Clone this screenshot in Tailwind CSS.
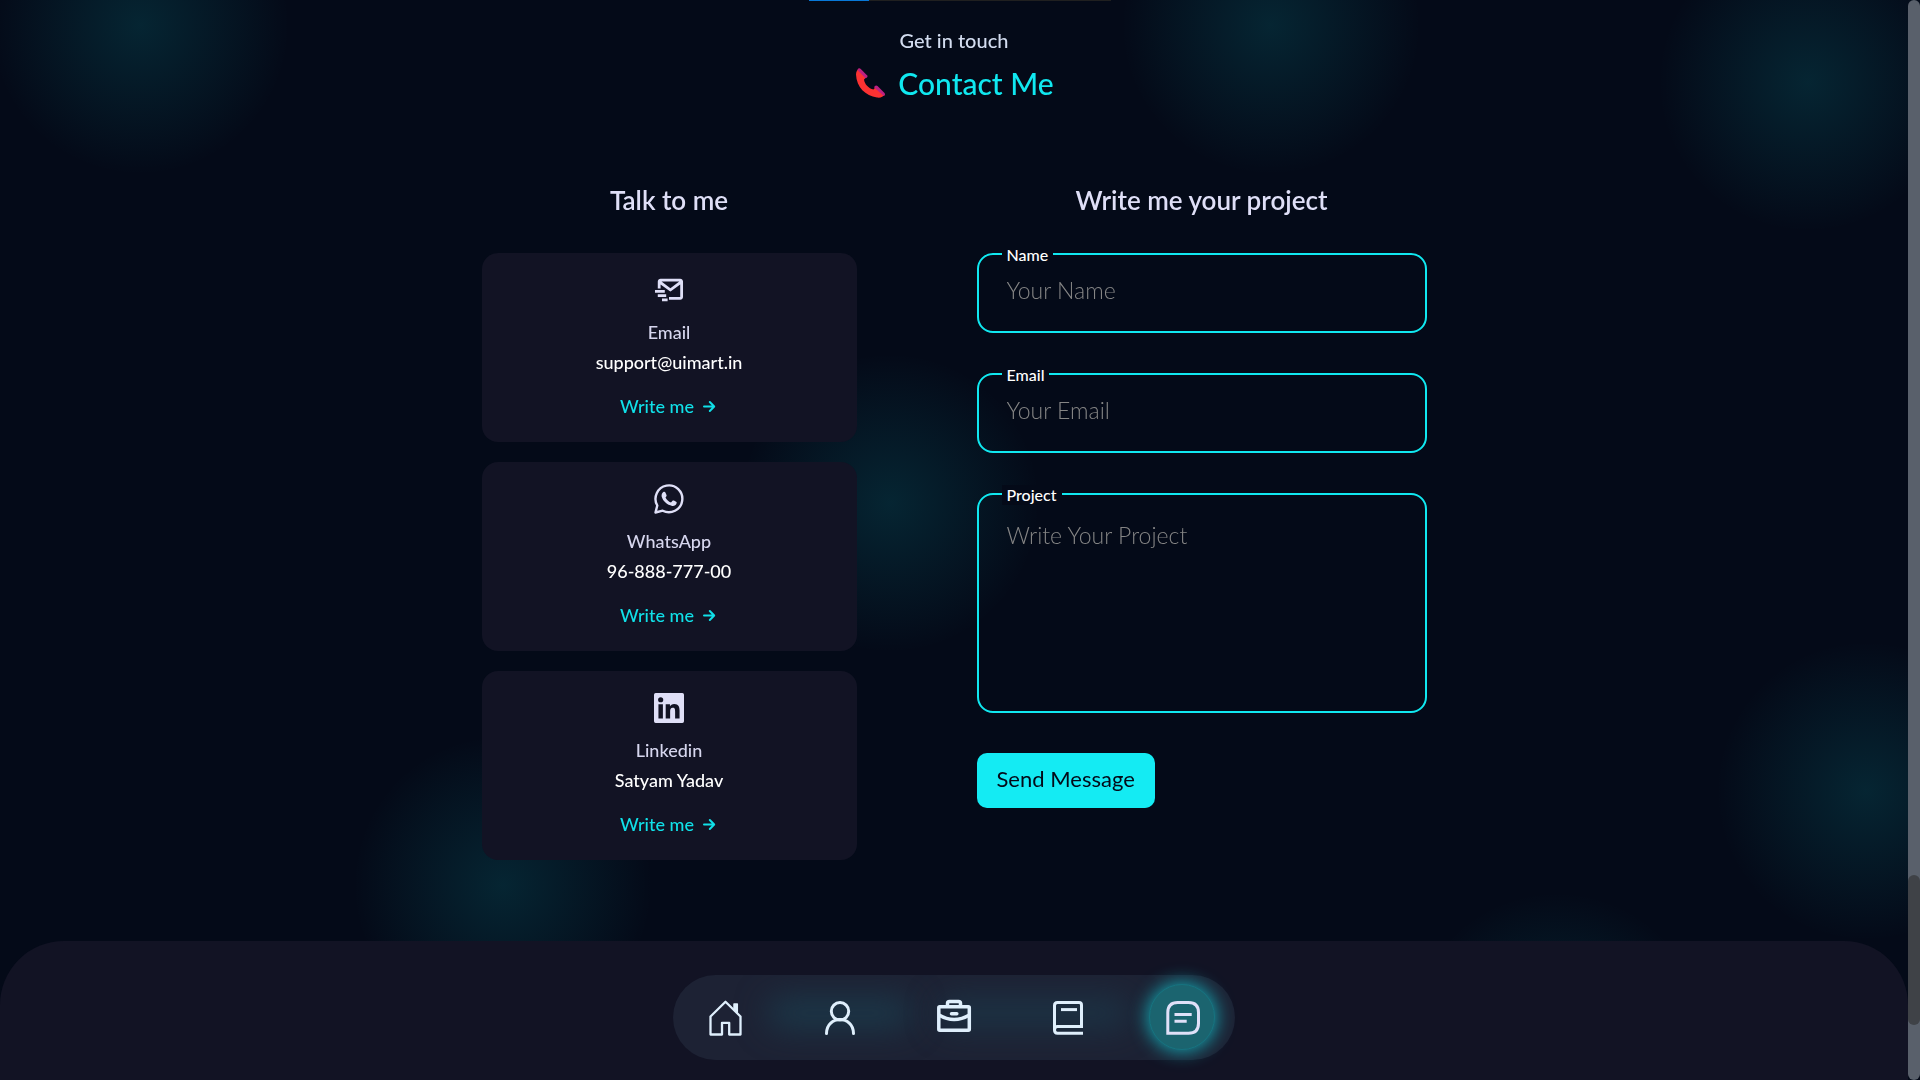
<!DOCTYPE html>
<html lang="en">
  <head>
    <meta charset="UTF-8" />
    <meta name="viewport" content="width=device-width, initial-scale=1.0" />
    <title>Contact Me</title>
    <script src="https://cdn.jsdelivr.net/npm/@tailwindcss/browser@4"></script>
  </head>
  <body class="relative flex min-h-screen flex-col overflow-x-hidden bg-[#040a18] pr-3 font-['Lato',sans-serif] text-white">

    <!-- Background glows -->
    <div class="pointer-events-none absolute inset-0 overflow-hidden" aria-hidden="true">
      <div class="absolute -left-[10px] -top-[125px] size-[300px] bg-[radial-gradient(closest-side,rgba(16,232,240,0.12),transparent)]"></div>
      <div class="absolute left-[1121px] -top-[125px] size-[300px] bg-[radial-gradient(closest-side,rgba(16,232,240,0.12),transparent)]"></div>
      <div class="absolute left-[1658px] -top-[68px] size-[300px] bg-[radial-gradient(closest-side,rgba(16,232,240,0.12),transparent)]"></div>
      <div class="absolute left-[740px] top-[353px] size-[300px] bg-[radial-gradient(closest-side,rgba(16,232,240,0.12),transparent)]"></div>
      <div class="absolute left-[353px] top-[735px] size-[300px] bg-[radial-gradient(closest-side,rgba(16,232,240,0.12),transparent)]"></div>
      <div class="absolute left-[1716px] top-[641px] size-[300px] bg-[radial-gradient(closest-side,rgba(16,232,240,0.12),transparent)]"></div>
      <div class="absolute left-[1407px] top-[892px] size-[300px] bg-[radial-gradient(closest-side,rgba(16,232,240,0.12),transparent)]"></div>
    </div>

    <!-- Scroll progress -->
    <div class="fixed left-1/2 top-0 h-px w-[302px] -translate-x-1/2 bg-[#202020]">
      <div class="h-full w-1/5 bg-[#0878d8]"></div>
    </div>

    <!-- Contact -->
    <main class="relative px-6 pt-7">
      <header class="flex flex-col items-center gap-3">
        <p class="text-xl leading-6 font-medium text-[#d3ddf0]">Get in touch</p>
        <h1 class="flex items-center gap-3 text-[30px] leading-[38px] font-medium text-[#10e8f0]">
          <svg class="size-8" viewBox="0 0 32 32" aria-hidden="true">
            <path d="M2 7.5C2 4.500 3.500 2.500 5 1.500L13 9.500L10 12.500C10.500 17 14.500 21.500 19.500 22.500L22.500 19L31 27.500C29 30 26.500 31 23 30.500C11.500 29 2.500 20 2 7.500Z" fill="#fb3232" />
            <path d="M3.800 2.200Q5 .500 6.500 1.800L13.200 8.500Q14 9.600 13 10.500L11.500 11.200L3.500 3Z" fill="#bc2082" />
            <path d="M20.500 19.500Q22 17.800 23.500 19L30.500 26Q31.500 27.200 30.600 28.400L29.800 29L20 20.200Z" fill="#bc2082" />
          </svg>
          Contact Me
        </h1>
      </header>

      <div class="mx-auto mt-[82px] grid w-fit grid-cols-[375px_450px] items-start gap-[120px]">
        <section>
          <h2 class="mb-[37px] text-center text-[26px] leading-8 font-semibold text-[#dfdff7]">Talk to me</h2>

          <div class="grid gap-5">
            <article class="flex flex-col items-center rounded-2xl bg-[#121324] pt-[22px] pb-6 text-lg leading-6 font-medium">
              <svg class="size-[30px] fill-[#dfdff7]" viewBox="1.300 1.300 21.400 21.400" aria-hidden="true">
                <path d="M20 4H6c-1.103 0-2 .897-2 2v5h2V8l6.400 4.800a1 1 0 0 0 1.200 0L20 8v9h-8v2h8c1.103 0 2-.897 2-2V6c0-1.103-.897-2-2-2zm-7 6.750L6.666 6h12.668L13 10.750z" />
                <path d="M2 12h7v2H2zm2 3h6v2H4zm3 3h4v2H7z" />
              </svg>
              <h3 class="mt-[15px] text-[#d6d6ee]">Email</h3>
              <p class="mt-1.5">support@uimart.in</p>
              <a href="mailto:support@uimart.in" class="mt-5 flex items-center gap-2 text-[#10e0e8]">
                Write me
                <svg class="size-4 fill-none stroke-current stroke-2" viewBox="0 0 16 16" stroke-linecap="round" stroke-linejoin="round" aria-hidden="true"><path d="M2 8.500H12M7.800 4L12.200 8.500L7.800 13" /></svg>
              </a>
            </article>

            <article class="flex flex-col items-center rounded-2xl bg-[#121324] pt-[22px] pb-6 text-lg leading-6 font-medium">
              <svg class="size-[30px]" viewBox="0 0 30 30" aria-hidden="true">
                <path d="M1.500 28.500L3.300 21.500A13.400 13.400 0 1 1 8.700 26.700Z" fill="none" stroke="#dfdff7" stroke-width="2.400" stroke-linejoin="round" />
                <path d="M9.300 8C10.200 7.500 11 7.700 11.400 8.500L12.500 11C12.800 11.700 12.500 12.300 11.500 13.500C12.800 15.900 14.500 17.500 17 18.500L18.500 16.800C18.900 16.400 19.400 16.300 19.900 16.600L22.100 17.700C22.700 18 22.800 18.500 22.600 19.200C22 21.200 20.200 22.200 18.200 21.900C13 20.900 9 17.200 7.700 12.800C7.300 11 7.900 9 9.300 8Z" fill="#dfdff7" />
              </svg>
              <h3 class="mt-[15px] text-[#d6d6ee]">WhatsApp</h3>
              <p class="mt-1.5">96-888-777-00</p>
              <a href="#whatsapp" class="mt-5 flex items-center gap-2 text-[#10e0e8]">
                Write me
                <svg class="size-4 fill-none stroke-current stroke-2" viewBox="0 0 16 16" stroke-linecap="round" stroke-linejoin="round" aria-hidden="true"><path d="M2 8.500H12M7.800 4L12.200 8.500L7.800 13" /></svg>
              </a>
            </article>

            <article class="flex flex-col items-center rounded-2xl bg-[#121324] pt-[22px] pb-6 text-lg leading-6 font-medium">
              <svg class="size-[30px] fill-[#dfdff7]" viewBox="3 3 18 18" aria-hidden="true">
                <path d="M20 3H4a1 1 0 0 0-1 1v16a1 1 0 0 0 1 1h16a1 1 0 0 0 1-1V4a1 1 0 0 0-1-1zM8.339 18.337H5.667v-8.590h2.672v8.590zM7.003 8.574a1.548 1.548 0 1 1 0-3.096 1.548 1.548 0 0 1 0 3.096zm11.335 9.763h-2.669V14.160c0-.996-.018-2.277-1.388-2.277-1.390 0-1.601 1.086-1.601 2.207v4.248h-2.667v-8.590h2.560v1.174h.037c.355-.675 1.227-1.387 2.524-1.387 2.704 0 3.203 1.778 3.203 4.092v4.710z" />
              </svg>
              <h3 class="mt-[15px] text-[#d6d6ee]">Linkedin</h3>
              <p class="mt-1.5">Satyam Yadav</p>
              <a href="#linkedin" class="mt-5 flex items-center gap-2 text-[#10e0e8]">
                Write me
                <svg class="size-4 fill-none stroke-current stroke-2" viewBox="0 0 16 16" stroke-linecap="round" stroke-linejoin="round" aria-hidden="true"><path d="M2 8.500H12M7.800 4L12.200 8.500L7.800 13" /></svg>
              </a>
            </article>
          </div>
        </section>

        <section>
          <h2 class="mb-[37px] text-center text-[26px] leading-8 font-semibold text-[#dfdff7]">Write me your project</h2>

          <form class="grid gap-10">
            <div class="relative">
              <label for="name" class="absolute left-[25px] -top-2 bg-[#040a18] px-[5px] text-base leading-5 font-medium">Name</label>
              <input id="name" type="text" placeholder="Your Name" class="block h-20 w-full rounded-2xl border-2 border-[#10e8f0] px-7 pb-1.5 text-[23px] font-light placeholder-[#858585] outline-none" />
            </div>
            <div class="relative">
              <label for="email" class="absolute left-[25px] -top-2 bg-[#040a18] px-[5px] text-base leading-5 font-medium">Email</label>
              <input id="email" type="email" placeholder="Your Email" class="block h-20 w-full rounded-2xl border-2 border-[#10e8f0] px-7 pb-1.5 text-[23px] font-light placeholder-[#858585] outline-none" />
            </div>
            <div class="relative">
              <label for="project" class="absolute left-[25px] -top-2 bg-[#040a18] px-[5px] text-base leading-5 font-medium">Project</label>
              <textarea id="project" placeholder="Write Your Project" class="block h-[220px] w-full resize-none rounded-2xl border-2 border-[#10e8f0] px-7 py-[26px] text-[23px] leading-7 font-light placeholder-[#858585] outline-none"></textarea>
            </div>
            <button type="submit" class="h-[55px] w-fit rounded-[10px] bg-[#14ebf3] px-5 pb-1 text-[22px] text-[#040a18]">Send Message</button>
          </form>
        </section>
      </div>
    </main>

    <footer class="relative mt-[81px] min-h-[139px] flex-1 rounded-t-[64px] bg-[#121324]"></footer>

    <!-- Floating navigation -->
    <nav class="fixed inset-x-0 bottom-5 mr-3 flex justify-center">
      <div class="relative flex gap-12 rounded-full bg-[#1d2234] px-5 pt-[9px] pb-[10px]">
        <div class="absolute inset-0 overflow-hidden rounded-full" aria-hidden="true">
          <div class="absolute left-[95px] top-6 h-7 w-36 rounded-full bg-[#1b3a4b] blur-lg"></div>
          <div class="absolute left-[265px] top-6 h-7 w-48 rounded-full bg-[#1b3a4b]/80 blur-lg"></div>
        </div>
        <a href="#home" aria-label="Home" class="relative grid size-[66px] place-items-center rounded-full">
          <svg class="size-10 fill-none stroke-[#dfeffc]" viewBox="0 0 40 40" stroke-width="2.300" stroke-linejoin="round">
            <path d="M4.500 19.500L19.500 4.700L34.500 19.500V37.500H23.200V25.800H16V37.500H4.500Z" />
            <path d="M28 7H31.300V15.500L28 12.200Z" fill="#dfeffc" stroke-width="1.500" />
          </svg>
        </a>
        <a href="#about" aria-label="About" class="relative grid size-[66px] place-items-center rounded-full">
          <svg class="size-10 fill-none stroke-[#dfeffc]" viewBox="0 0 40 40" stroke-width="3" stroke-linecap="round">
            <circle cx="20" cy="14.300" r="8.700" />
            <path d="M6.500 36.500C6.500 17.900 33.500 17.900 33.500 36.500" />
          </svg>
        </a>
        <a href="#services" aria-label="Services" class="relative grid size-[66px] place-items-center rounded-full">
          <svg class="size-10 fill-none stroke-[#dfeffc]" viewBox="0 0 40 40" stroke-width="3.500" stroke-linejoin="round">
            <rect x="4.800" y="9.700" width="30.500" height="23.600" rx="1" />
            <path d="M13.500 9.500V6.600Q13.500 4.600 15.500 4.600H24.500Q26.500 4.600 26.500 6.600V9.500" />
            <path d="M5 18Q20 27 35.500 18" />
            <path d="M17.500 16.700H22.800" stroke-linecap="round" />
          </svg>
        </a>
        <a href="#portfolio" aria-label="Portfolio" class="relative grid size-[66px] place-items-center rounded-full">
          <svg class="size-10 fill-none stroke-[#dfeffc]" viewBox="0 0 40 40" stroke-width="3">
            <path d="M35 36.200H9.500Q6.500 36.200 6.500 33V8.500Q6.500 5.500 9.500 5.500H31Q33.500 5.500 33.500 8V29.500H9.500Q6.500 29.500 6.500 33" />
            <path d="M13 12.600H29" />
          </svg>
        </a>
        <a href="#contact" aria-label="Contact" aria-current="page" class="relative grid size-[66px] place-items-center rounded-full border border-[#177480] bg-[#1b646f] shadow-[0_0_18px_2px_rgba(20,190,200,0.8)]">
          <svg class="size-10 fill-none stroke-[#e0e0f8]" viewBox="0 0 40 40" stroke-width="3">
            <path d="M5.800 36.300V15.500Q5.800 5.500 15.800 5.500H26.500Q36.500 5.500 36.500 15.500V26.300Q36.500 36.300 26.500 36.300Z" />
            <path d="M12.500 17.500H29.700M12.500 24.200H24.700" />
          </svg>
        </a>
      </div>
    </nav>

    <!-- Scrollbar -->
    <div class="fixed inset-y-0 right-0 w-3 rounded-full bg-[#59606b]" aria-hidden="true">
      <div class="absolute bottom-[55px] h-[150px] w-full rounded-full bg-[#3f4247]"></div>
    </div>
  </body>
</html>
